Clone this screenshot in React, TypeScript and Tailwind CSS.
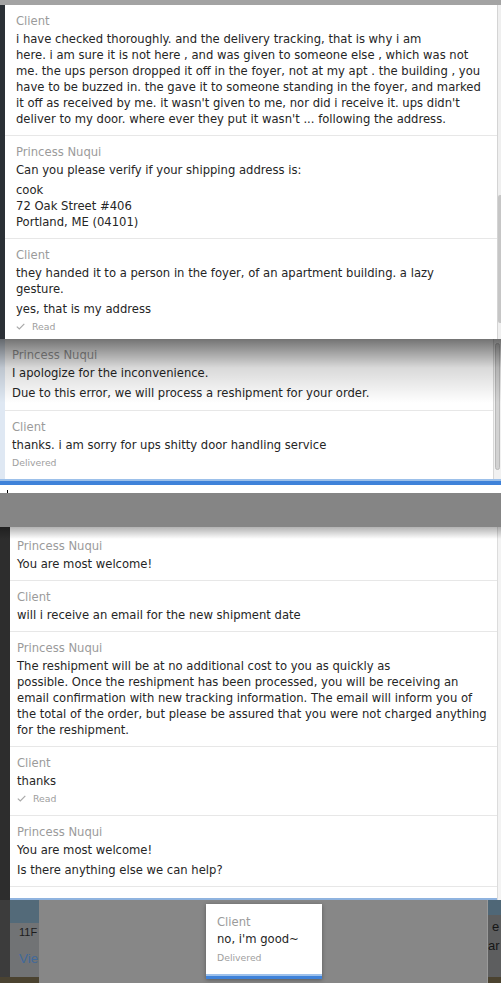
type Msg = {
  name: string;
  paras: string[][];
  status?: "read" | "delivered";
};

const shotOne: Msg[] = [
  {
    name: "Client",
    paras: [
      [
        "i have checked thoroughly. and the delivery tracking, that is why i am",
        "here. i am sure it is not here , and was given to someone else , which was not",
        "me. the ups person dropped it off in the foyer, not at my apt . the building , you",
        "have to be buzzed in. the gave it to someone standing in the foyer, and marked",
        "it off as received by me. it wasn't given to me, nor did i receive it. ups didn't",
        "deliver to my door. where ever they put it wasn't ... following the address.",
      ],
    ],
  },
  {
    name: "Princess Nuqui",
    paras: [
      ["Can you please verify if your shipping address is:"],
      ["cook", "72 Oak Street #406", "Portland, ME (04101)"],
    ],
  },
  {
    name: "Client",
    paras: [
      ["they handed it to a person in the foyer, of an apartment building. a lazy", "gesture."],
      ["yes, that is my address"],
    ],
    status: "read",
  },
];

const shotTwo: Msg[] = [
  {
    name: "Princess Nuqui",
    paras: [
      ["I apologize for the inconvenience."],
      ["Due to this error, we will process a reshipment for your order."],
    ],
  },
  {
    name: "Client",
    paras: [["thanks. i am sorry for ups shitty door handling service"]],
    status: "delivered",
  },
];

const shotThree: Msg[] = [
  { name: "Princess Nuqui", paras: [["You are most welcome!"]] },
  { name: "Client", paras: [["will i receive an email for the new shipment date"]] },
  {
    name: "Princess Nuqui",
    paras: [
      [
        "The reshipment will be at no additional cost to you as quickly as",
        "possible. Once the reshipment has been processed, you will be receiving an",
        "email confirmation with new tracking information. The email will inform you of",
        "the total of the order, but please be assured that you were not charged anything",
        "for the reshipment.",
      ],
    ],
  },
  { name: "Client", paras: [["thanks"]], status: "read" },
  {
    name: "Princess Nuqui",
    paras: [["You are most welcome!"], ["Is there anything else we can help?"]],
  },
];

function Check() {
  return (
    <svg width="9" height="7" viewBox="0 0 9 7" className="mr-[7px]">
      <path d="M0.8 3.6 L3.3 6 L8.3 0.8" fill="none" stroke="#a9a9a9" strokeWidth="1.2" />
    </svg>
  );
}

function Message({ m, pad }: { m: Msg; pad: string }) {
  return (
    <div className={pad}>
      <div className="h-4 leading-4 text-[#9b9b9b] mb-[1.5px] whitespace-nowrap">{m.name}</div>
      {m.paras.map((p, i) => (
        <div key={i} className={i > 0 ? "mt-1" : ""}>
          {p.map((line, j) => (
            <div key={j} className="h-4 leading-4 whitespace-nowrap">
              {line}
            </div>
          ))}
        </div>
      ))}
      {m.status && (
        <div className="mt-[2.3px] h-4 flex items-center text-[9.3px] text-[#9e9e9e]">
          {m.status === "read" && <Check />}
          {m.status === "read" ? "Read" : "Delivered"}
        </div>
      )}
    </div>
  );
}

export default function App() {
  return (
    <div className="w-[501px] h-[983px] overflow-hidden bg-[#878787] text-[11.6px] text-[#252525] font-['DejaVu_Sans',sans-serif]">
      {/* first screenshot */}
      <div className="h-[5px] bg-[#a3a3a3]" />
      <div className="flex h-[334px]">
        <div className="w-[5px] bg-[#2b3036]" />
        <div className="w-[492px] bg-white overflow-hidden">
          {shotOne.map((m, i) => (
            <Message
              key={i}
              m={m}
              pad={i === 0 ? "px-[11px] pt-[8px] pb-[8.5px]" : "border-t border-[#e7e7e7] px-[11px] pt-[8px] pb-[8.5px]"}
            />
          ))}
        </div>
        <div className="w-[4px] flex flex-col bg-[#efefef] border-l border-[#d4d4d4]">
          <div className="h-[190px]" />
          <div className="h-[128px] bg-[#c6c6c6] rounded-l-[2px]" />
        </div>
      </div>

      {/* second screenshot */}
      <div className="relative flex h-[140px]">
        <div className="w-[5px] bg-[#dfe8f3]" />
        <div className="w-[488px] bg-white overflow-hidden">
          {shotTwo.map((m, i) => (
            <Message
              key={i}
              m={m}
              pad={i === 0 ? "px-[7px] pt-[8px] pb-[9.5px]" : "border-t border-[#e7e7e7] px-[7px] pt-[8px] pb-[8.5px]"}
            />
          ))}
        </div>
        <div className="w-[8px] flex flex-col bg-[#f1f1f1] border-l border-[#d8d8d8] pl-[1px] pr-[1px]">
          <div className="h-[4px]" />
          <div className="h-[127px] bg-[#d2d2d2] border border-[#b9b9b9] rounded-[3px]" />
        </div>
        <div className="absolute top-0 left-0 right-0 h-[64px] bg-linear-to-b from-black/55 via-black/15 via-45% to-black/0" />
      </div>
      <div className="h-[2px] bg-[#9cc0ea]" />
      <div className="h-[4px] bg-[#3f82d9]" />
      <div className="h-[8px] bg-white pl-[7px] pt-[5px]">
        <div className="w-[1px] h-[3px] bg-black" />
      </div>

      {/* third screenshot */}
      <div className="h-[34px] bg-[#858585]" />
      <div className="relative flex h-[373px]">
        <div className="w-[10px] bg-[#2d2d2d]" />
        <div className="w-[487px] flex flex-col bg-white">
          <div className="flex-1 overflow-hidden">
            {shotThree.map((m, i) => (
              <Message
                key={i}
                m={m}
                pad={i === 0 ? "px-[7px] pt-[11px] pb-[8.5px]" : "border-t border-[#e7e7e7] px-[7px] pt-[8px] pb-[8.5px]"}
              />
            ))}
            <div className="border-t border-[#e7e7e7]" />
          </div>
          <div className="h-[2px] bg-[#8fb3df]" />
        </div>
        <div className="w-[4px] bg-[#f3f3f3] border-l border-[#dcdcdc]" />
        <div className="absolute top-0 left-0 right-0 h-[12px] bg-linear-to-b from-black/30 to-black/0" />
      </div>

      {/* bottom, behind the overlay */}
      <div className="flex h-[83px]">
        <div className="w-[10px] flex flex-col bg-[#3c3c3c]">
          <div className="flex-1" />
          <div className="h-[6px] bg-[#4a4332]" />
        </div>
        <div className="w-[29px] flex flex-col overflow-hidden font-['Liberation_Sans',sans-serif]">
          <div className="h-[23px] bg-[#536a79]" />
          <div className="flex-1 bg-[#717375] pl-[9px] pt-[3px] whitespace-nowrap">
            <div className="h-[13px] leading-[13px] text-[11px] text-[#1d1d1d]">11F</div>
            <div className="mt-[12px] h-[15px] leading-[15px] text-[13.5px] text-[#41699a]">Vie</div>
          </div>
          <div className="h-[6px] bg-[#4b4330]" />
        </div>
        <div className="flex-1 pl-[167px] pt-[4px]">
          <div className="w-[116px] bg-white shadow-[0_1px_4px_rgba(0,0,0,0.35)]">
            <Message m={{ name: "Client", paras: [["no, i'm good~"]], status: "delivered" }} pad="px-[11px] pt-[9.7px] pb-[8.8px]" />
            <div className="h-[1.5px] bg-[#9dc1ec]" />
            <div className="h-[3px] bg-[#3f82d9]" />
          </div>
        </div>
        <div className="w-[14px] flex flex-col overflow-hidden border-l border-[#9a9a9a] font-['Liberation_Sans',sans-serif]">
          <div className="h-[15px] bg-[#4f6777]" />
          <div className="flex-1 bg-[#5d5e5f] text-[13px] text-[#161616] whitespace-nowrap">
            <div className="h-[16px] leading-[16px] pl-[4px] mt-[4px]">e</div>
            <div className="h-[16px] leading-[16px] pl-[0px] mt-[3px]">ar</div>
          </div>
          <div className="h-[6px] bg-[#4b4330]" />
        </div>
      </div>
    </div>
  );
}
